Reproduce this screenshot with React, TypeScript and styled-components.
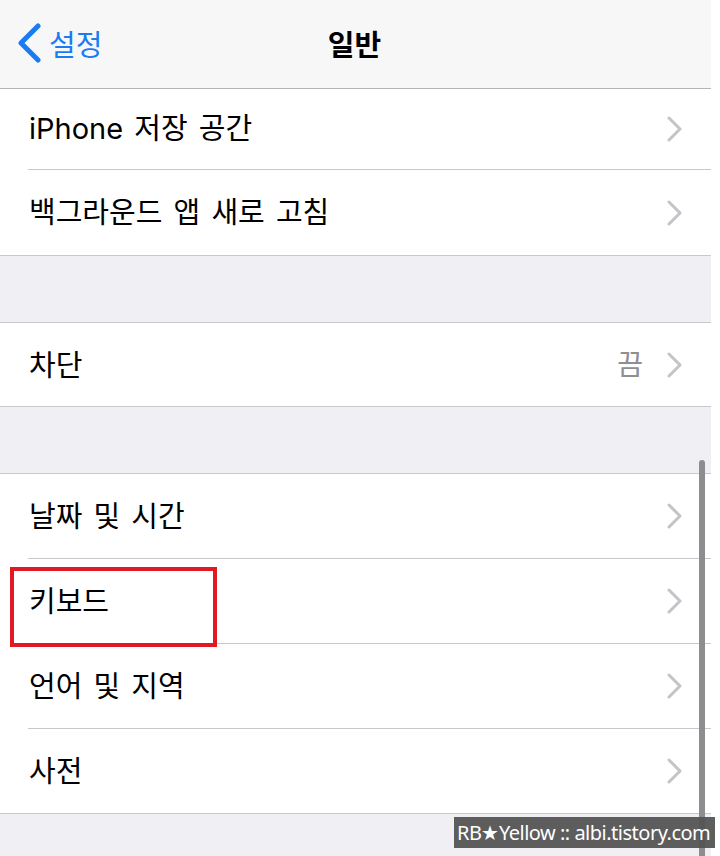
import React from 'react';
import styled, { createGlobalStyle } from 'styled-components';

const GlobalStyle = createGlobalStyle`
  html, body {
    margin: 0;
    padding: 0;
    background: #fff;
  }
  body {
    font-family: "Inter", "Noto Sans CJK KR", sans-serif;
    -webkit-font-smoothing: antialiased;
  }
`;

const Page = styled.div`
  position: relative;
  width: 720px;
  height: 856px;
  overflow: hidden;
  background: #fff;
`;

const Screen = styled.div`
  width: 711px;
  height: 856px;
  background: #efeff4;
`;

const NavBar = styled.header`
  box-sizing: border-box;
  height: 89px;
  background: #f7f7f8;
  border-bottom: 1px solid #b4b4b8;
  display: grid;
  grid-template-columns: 1fr auto 1fr;
  align-items: center;
`;

const BackButton = styled.div`
  display: flex;
  align-items: center;
  gap: 8px;
  padding-left: 17px;
  color: #1a7cf3;
  font-family: "Noto Sans CJK KR", sans-serif;
  font-size: 29px;
  margin-top: -2px;
`;

const Title = styled.h1`
  margin: 0;
  font-family: "Noto Sans CJK KR", sans-serif;
  font-size: 29px;
  font-weight: 700;
  color: #000;
  margin-top: -2px;
  margin-left: -2px;
`;

const Group = styled.section<{ $gap?: number; $top?: boolean }>`
  margin-top: ${(p) => p.$gap ?? 0}px;
  background: #fff;
  border-top: ${(p) => (p.$top ? '1px solid #c8c7cc' : 'none')};
  border-bottom: 1px solid #c8c7cc;
`;

const Row = styled.div<{ $h: number; $lift?: number }>`
  box-sizing: border-box;
  height: ${(p) => p.$h}px;
  display: flex;
  align-items: center;
  padding: 0 29px 0 29px;

  & > span {
    margin-top: ${(p) => -(p.$lift ?? 4)}px;
  }
`;

const Label = styled.span`
  flex: 1;
  font-size: 29px;
  color: #000;
  word-spacing: 3px;
`;

const Value = styled.span`
  font-family: "Noto Sans CJK KR", sans-serif;
  font-size: 28px;
  color: #8e8e93;
  margin-right: 24px;
`;

const Divider = styled.div`
  height: 1px;
  margin-left: 28px;
  background: #c8c7cc;
`;

const Highlight = styled.div`
  position: absolute;
  left: 10px;
  top: 567px;
  width: 207px;
  height: 80px;
  box-sizing: border-box;
  border: 4px solid #e01a22;
`;

const ScrollIndicator = styled.div`
  position: absolute;
  left: 699px;
  top: 460px;
  width: 6px;
  bottom: -10px;
  border-radius: 3px;
  background: #8d8d8f;
`;

const Watermark = styled.div`
  position: absolute;
  left: 454px;
  top: 817px;
  width: 261px;
  height: 31px;
  box-sizing: border-box;
  background: rgba(84, 84, 84, 0.94);
  color: #fff;
  font-family: "Noto Sans", sans-serif;
  font-size: 20px;
  line-height: 31px;
  letter-spacing: -0.5px;
  padding-left: 3px;
  white-space: nowrap;
`;

const Chevron = () => (
  <svg width="15" height="26" viewBox="0 0 15 26" fill="none">
    <path d="M2 2 L13 13 L2 24" stroke="#c4c4c8" strokeWidth="3" strokeLinecap="round" strokeLinejoin="round" />
  </svg>
);

const BackChevron = () => (
  <svg width="24" height="40" viewBox="0 0 24 40" fill="none">
    <path d="M21 3 L4 20 L21 37" stroke="#1a7cf3" strokeWidth="5" strokeLinecap="round" strokeLinejoin="round" />
  </svg>
);

interface Item {
  label: string;
  value?: string;
  h: number;
  lift?: number;
}

const groups: { gap: number; top: boolean; items: Item[] }[] = [
  {
    gap: 0,
    top: false,
    items: [
      { label: 'iPhone 저장 공간', h: 80, lift: 6 },
      { label: '백그라운드 앱 새로 고침', h: 85, lift: 5 },
    ],
  },
  { gap: 66, top: true, items: [{ label: '차단', value: '끔', h: 83 }] },
  {
    gap: 66,
    top: true,
    items: [
      { label: '날짜 및 시간', h: 84 },
      { label: '키보드', h: 84 },
      { label: '언어 및 지역', h: 84 },
      { label: '사전', h: 84 },
    ],
  },
];

const App: React.FC = () => {
  return (
    <>
      <GlobalStyle />
      <Page>
        <Screen>
          <NavBar>
            <BackButton>
              <BackChevron />
              <span>설정</span>
            </BackButton>
            <Title>일반</Title>
            <div />
          </NavBar>

          {groups.map((g, gi) => (
            <Group key={gi} $gap={g.gap} $top={g.top}>
              {g.items.map((item, i) => (
                <React.Fragment key={item.label}>
                  {i > 0 && <Divider />}
                  <Row $h={item.h} $lift={item.lift}>
                    <Label>{item.label}</Label>
                    {item.value && <Value>{item.value}</Value>}
                    <Chevron />
                  </Row>
                </React.Fragment>
              ))}
            </Group>
          ))}
        </Screen>

        <Highlight />
        <ScrollIndicator />
        <Watermark>RB★Yellow :: albi.tistory.com</Watermark>
      </Page>
    </>
  );
};

export default App;
